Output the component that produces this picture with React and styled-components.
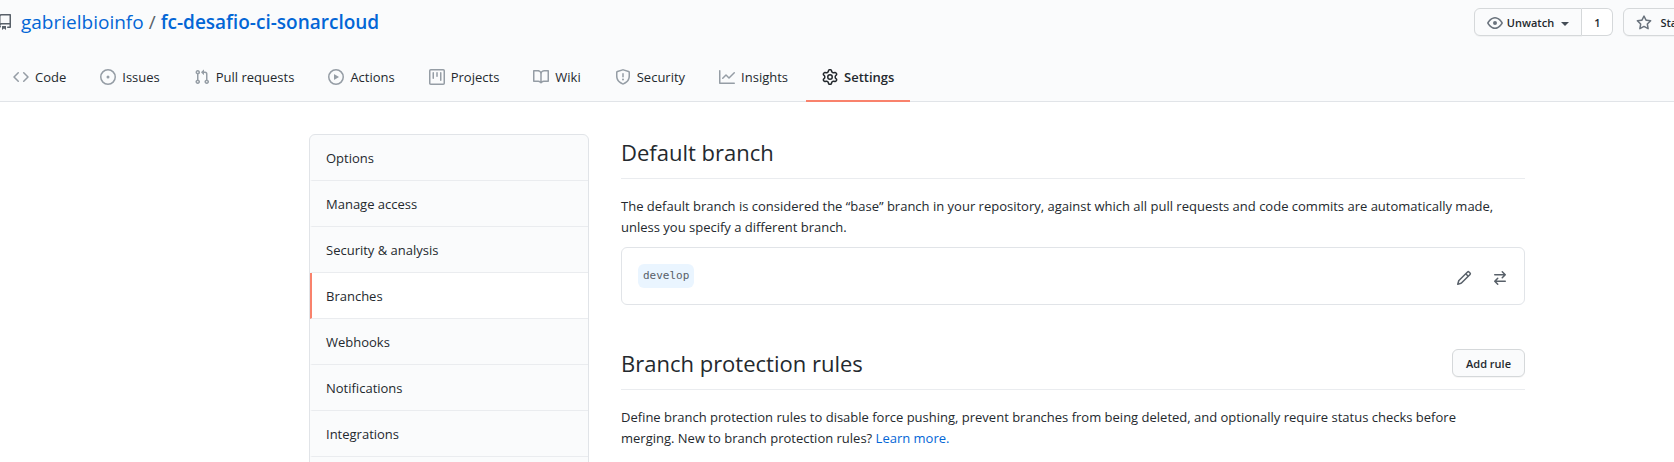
import React from "react";
import styled, { createGlobalStyle } from "styled-components";

const GlobalStyle = createGlobalStyle`
  *, *::before, *::after { box-sizing: border-box; }
  body {
    margin: 0;
    background: #ffffff;
    color: #24292e;
    font-family: "Open Sans", "Noto Sans", sans-serif;
    font-size: 13px;
    line-height: 21px;
    overflow: hidden;
  }
  a { color: #0366d6; text-decoration: none; }
  h1, h2, p { margin: 0; padding: 0; }
  button { font-family: inherit; color: inherit; cursor: pointer; }
`;

const icons = {
  repo: "M2 2.5A2.5 2.5 0 014.5 0h8.75a.75.75 0 01.75.75v12.5a.75.75 0 01-.75.75h-2.5a.75.75 0 110-1.5h1.75v-2h-8a1 1 0 00-.714 1.7.75.75 0 01-1.072 1.05A2.495 2.495 0 012 11.5v-9zm10.5-1V9h-8c-.356 0-.694.074-1 .208V2.5a1 1 0 011-1h8zM5 12.25v3.25a.25.25 0 00.4.2l1.45-1.087a.25.25 0 01.3 0L8.6 15.7a.25.25 0 00.4-.2v-3.25a.25.25 0 00-.25-.25h-3.5a.25.25 0 00-.25.25z",
  code: "M4.72 3.22a.75.75 0 011.06 1.06L2.06 8l3.72 3.72a.75.75 0 11-1.06 1.06L.47 8.53a.75.75 0 010-1.06l4.25-4.25zm6.56 0a.75.75 0 10-1.06 1.06L13.94 8l-3.72 3.72a.75.75 0 101.06 1.06l4.25-4.25a.75.75 0 000-1.06l-4.25-4.25z",
  issue: "M8 9.5a1.5 1.5 0 100-3 1.5 1.5 0 000 3zM8 0a8 8 0 100 16A8 8 0 008 0zM1.5 8a6.5 6.5 0 1113 0 6.5 6.5 0 01-13 0z",
  pull: "M7.177 3.073L9.573.677A.25.25 0 0110 .854v4.792a.25.25 0 01-.427.177L7.177 3.427a.25.25 0 010-.354zM3.75 2.5a.75.75 0 100 1.5.75.75 0 000-1.5zm-2.25.75a2.25 2.25 0 113 2.122v5.256a2.251 2.251 0 11-1.5 0V5.372A2.25 2.25 0 011.5 3.25zM11 2.5h-1V4h1a1 1 0 011 1v5.628a2.251 2.251 0 101.5 0V5A2.5 2.5 0 0011 2.5zm1 10.25a.75.75 0 111.5 0 .75.75 0 01-1.5 0zM3.75 12a.75.75 0 100 1.5.75.75 0 000-1.5z",
  play: "M1.5 8a6.5 6.5 0 1113 0 6.5 6.5 0 01-13 0zM8 0a8 8 0 100 16A8 8 0 008 0zM6.379 5.227A.25.25 0 006 5.442v5.117a.25.25 0 00.379.214l4.264-2.559a.25.25 0 000-.428L6.379 5.227z",
  project: "M1.75 0A1.75 1.75 0 000 1.75v12.5C0 15.216.784 16 1.75 16h12.5A1.75 1.75 0 0016 14.25V1.75A1.75 1.75 0 0014.25 0H1.75zM1.5 1.75a.25.25 0 01.25-.25h12.5a.25.25 0 01.25.25v12.5a.25.25 0 01-.25.25H1.75a.25.25 0 01-.25-.25V1.75zM11.75 3a.75.75 0 00-.75.75v7.5a.75.75 0 001.5 0v-7.5a.75.75 0 00-.75-.75zm-8.25.75a.75.75 0 011.5 0v5.5a.75.75 0 01-1.5 0v-5.5zM8 3a.75.75 0 00-.75.75v3.5a.75.75 0 001.5 0v-3.5A.75.75 0 008 3z",
  book: "M0 1.75A.75.75 0 01.75 1h4.253c1.227 0 2.317.59 3 1.501A3.744 3.744 0 0111.006 1h4.245a.75.75 0 01.75.75v10.5a.75.75 0 01-.75.75h-4.507a2.25 2.25 0 00-1.591.659l-.622.621a.75.75 0 01-1.06 0l-.622-.621A2.25 2.25 0 005.258 13H.75a.75.75 0 01-.75-.75V1.75zm8.755 3a2.25 2.25 0 012.25-2.25H14.5v9h-3.757c-.71 0-1.4.201-1.992.572l.004-7.322zm-1.504 7.324l.004-5.073-.002-2.253A2.25 2.25 0 005.003 2.5H1.5v9h3.757a3.75 3.75 0 011.994.574z",
  shield: "M7.467.133a1.75 1.75 0 011.066 0l5.25 1.68A1.75 1.75 0 0115 3.48V7c0 1.566-.32 3.182-1.303 4.682-.983 1.498-2.585 2.813-5.032 3.855a1.7 1.7 0 01-1.33 0c-2.447-1.042-4.049-2.357-5.032-3.855C1.32 10.182 1 8.566 1 7V3.48a1.75 1.75 0 011.217-1.667l5.25-1.68zm.61 1.429a.25.25 0 00-.153 0l-5.25 1.68a.25.25 0 00-.174.238V7c0 1.358.275 2.666 1.057 3.86.784 1.194 2.121 2.34 4.366 3.297a.2.2 0 00.154 0c2.245-.956 3.582-2.104 4.366-3.298C13.225 9.666 13.5 8.36 13.5 7V3.48a.25.25 0 00-.174-.237l-5.25-1.68zM9 10.5a1 1 0 11-2 0 1 1 0 012 0zm-.25-5.75a.75.75 0 10-1.5 0v3a.75.75 0 001.5 0v-3z",
  graph: "M1.5 1.75a.75.75 0 00-1.5 0v12.5c0 .414.336.75.75.75h14.5a.75.75 0 000-1.5H1.5V1.75zm14.28 2.53a.75.75 0 00-1.06-1.06L10 7.94 7.53 5.47a.75.75 0 00-1.06 0L3.22 8.72a.75.75 0 001.06 1.06L7 7.06l2.47 2.47a.75.75 0 001.06 0l5.25-5.25z",
  gear: "M7.429 1.525a6.593 6.593 0 011.142 0c.036.003.108.036.137.146l.289 1.105c.147.56.55.967.997 1.189.174.086.341.183.501.29.417.278.97.423 1.53.27l1.102-.303c.11-.03.175.016.195.046.219.31.41.641.573.989.014.031.022.11-.059.19l-.815.806c-.411.406-.562.957-.53 1.456a4.588 4.588 0 010 .582c-.032.499.119 1.05.53 1.456l.815.806c.08.08.073.159.059.19a6.494 6.494 0 01-.573.99c-.02.029-.086.074-.195.045l-1.103-.303c-.559-.153-1.112-.008-1.529.27-.16.107-.327.204-.5.29-.449.222-.851.628-.998 1.189l-.289 1.105c-.029.11-.101.143-.137.146a6.613 6.613 0 01-1.142 0c-.036-.003-.108-.037-.137-.146l-.289-1.105c-.147-.56-.55-.967-.997-1.189a4.502 4.502 0 01-.501-.29c-.417-.278-.97-.423-1.53-.27l-1.102.303c-.11.03-.175-.016-.195-.046a6.492 6.492 0 01-.573-.989c-.014-.031-.022-.11.059-.19l.815-.806c.411-.406.562-.957.53-1.456a4.587 4.587 0 010-.582c.032-.499-.119-1.05-.53-1.456l-.815-.806c-.08-.08-.073-.159-.059-.19a6.44 6.44 0 01.573-.99c.02-.029.086-.075.195-.045l1.103.303c.559.153 1.112.008 1.529-.27.16-.107.327-.204.5-.29.449-.222.851-.628.998-1.189l.289-1.105c.029-.11.101-.143.137-.146zM8 0c-.236 0-.47.01-.701.03-.743.065-1.29.615-1.458 1.261l-.29 1.106c-.017.066-.078.158-.211.224a5.994 5.994 0 00-.668.386c-.123.082-.233.09-.3.071L3.27 2.776c-.644-.177-1.392.02-1.82.63a7.977 7.977 0 00-.704 1.217c-.315.675-.111 1.422.363 1.891l.815.806c.05.048.098.147.088.294a6.084 6.084 0 000 .772c.01.147-.038.246-.088.294l-.815.806c-.474.469-.678 1.216-.363 1.891.2.428.436.835.704 1.218.428.609 1.176.806 1.82.63l1.103-.303c.066-.019.176-.011.299.071.213.143.436.272.668.386.133.066.194.158.212.224l.289 1.106c.169.646.715 1.196 1.458 1.26a8.094 8.094 0 001.402 0c.743-.064 1.29-.614 1.458-1.26l.29-1.106c.017-.066.078-.158.211-.224a5.98 5.98 0 00.668-.386c.123-.082.233-.09.3-.071l1.102.302c.644.177 1.392-.02 1.82-.63.268-.382.505-.789.704-1.217.315-.675.111-1.422-.364-1.891l-.814-.806c-.05-.048-.098-.147-.088-.294a6.1 6.1 0 000-.772c-.01-.147.039-.246.088-.294l.814-.806c.475-.469.679-1.216.364-1.891a7.992 7.992 0 00-.704-1.218c-.428-.609-1.176-.806-1.82-.63l-1.103.303c-.066.019-.176.011-.299-.071a5.991 5.991 0 00-.668-.386c-.133-.066-.194-.158-.212-.224L10.16 1.29C9.99.645 9.444.095 8.701.031A8.094 8.094 0 008 0zm1.5 8a1.5 1.5 0 11-3 0 1.5 1.5 0 013 0zM11 8a3 3 0 11-6 0 3 3 0 016 0z",
  eye: "M1.679 7.932c.412-.621 1.242-1.75 2.366-2.717C5.175 4.242 6.527 3.5 8 3.5c1.473 0 2.824.742 3.955 1.715 1.124.967 1.954 2.096 2.366 2.717a.119.119 0 010 .136c-.412.621-1.242 1.75-2.366 2.717C10.825 11.758 9.473 12.5 8 12.5c-1.473 0-2.824-.742-3.955-1.715C2.92 9.818 2.09 8.69 1.679 8.068a.119.119 0 010-.136zM8 2c-1.981 0-3.67.992-4.933 2.078C1.797 5.169.88 6.423.43 7.1a1.619 1.619 0 000 1.798c.45.678 1.367 1.932 2.637 3.024C4.329 13.008 6.019 14 8 14c1.981 0 3.67-.992 4.933-2.078 1.27-1.091 2.187-2.345 2.637-3.023a1.619 1.619 0 000-1.798c-.45-.678-1.367-1.932-2.637-3.023C11.671 2.992 9.981 2 8 2zm0 8a2 2 0 100-4 2 2 0 000 4z",
  star: "M8 .25a.75.75 0 01.673.418l1.882 3.815 4.21.612a.75.75 0 01.416 1.279l-3.046 2.97.719 4.192a.75.75 0 01-1.088.791L8 12.347l-3.766 1.98a.75.75 0 01-1.088-.79l.72-4.194L.818 6.374a.75.75 0 01.416-1.28l4.21-.611L7.327.668A.75.75 0 018 .25zm0 2.445L6.615 5.5a.75.75 0 01-.564.41l-3.097.45 2.24 2.184a.75.75 0 01.216.664l-.528 3.084 2.769-1.456a.75.75 0 01.698 0l2.77 1.456-.53-3.084a.75.75 0 01.216-.664l2.24-2.183-3.096-.45a.75.75 0 01-.564-.41L8 2.694v.001z",
  pencil: "M11.013 1.427a1.75 1.75 0 012.474 0l1.086 1.086a1.75 1.75 0 010 2.474l-8.61 8.61c-.21.21-.47.364-.756.445l-3.251.93a.75.75 0 01-.927-.928l.929-3.25a1.75 1.75 0 01.445-.758l8.61-8.61zm1.414 1.06a.25.25 0 00-.354 0L10.811 3.75l1.439 1.44 1.263-1.263a.25.25 0 000-.354l-1.086-1.086zM11.189 6.25L9.75 4.81l-6.286 6.287a.25.25 0 00-.064.108l-.558 1.953 1.953-.558a.249.249 0 00.108-.064l6.286-6.286z",
  swap: "M5.22 14.78a.75.75 0 001.06-1.06L4.56 12h8.69a.75.75 0 000-1.5H4.56l1.72-1.72a.75.75 0 00-1.06-1.06l-3 3a.75.75 0 000 1.06l3 3zm5.56-6.5a.75.75 0 11-1.06-1.06l1.72-1.72H2.75a.75.75 0 010-1.5h8.69L9.72 2.28a.75.75 0 011.06-1.06l3 3a.75.75 0 010 1.06l-3 3z",
};

const IconSvg = styled.svg`
  flex: none;
  width: 16px;
  height: 16px;
  fill: ${(p) => p.$color};
`;

function Icon({ name, color = "#6a737d" }) {
  return (
    <IconSvg viewBox="0 0 16 16" $color={color} aria-hidden="true">
      <path fillRule="evenodd" d={icons[name]} />
    </IconSvg>
  );
}

const Header = styled.header`
  background: #fafbfc;
  box-shadow: inset 0 -1px 0 #e1e4e8;
`;

const TitleRow = styled.div`
  display: flex;
  justify-content: space-between;
  align-items: flex-start;
  height: 54px;
  padding-top: 8px;
`;

const RepoTitle = styled.h1`
  display: flex;
  align-items: center;
  gap: 8px;
  margin-left: -3px;
  font-size: 19px;
  font-weight: 400;
  line-height: 28px;
  white-space: nowrap;
`;

const RepoPath = styled.span`
  display: flex;
  gap: 5px;
`;

const RepoName = styled.a`
  font-weight: 600;
`;

const Slash = styled.span`
  color: #586069;
`;

const Actions = styled.div`
  display: flex;
  gap: 10px;
  margin-right: -21px;
`;

const ButtonGroup = styled.div`
  display: flex;
`;

const Button = styled.button`
  display: flex;
  align-items: center;
  gap: ${(p) => p.$gap || "4px"};
  height: 28px;
  padding: 1px ${(p) => p.$pad || "12px"} 0;
  border: 1px solid #d5d8da;
  border-radius: ${(p) => (p.$joined ? "6px 0 0 6px" : "6px")};
  background: #fafbfc;
  box-shadow: 0 1px 0 rgba(27, 31, 35, 0.04);
  font-size: 11px;
  font-weight: 600;
  line-height: 20px;
  white-space: nowrap;
`;

const Count = styled.a`
  display: flex;
  align-items: center;
  height: 28px;
  padding: 1px 12px 0;
  border: 1px solid #d5d8da;
  border-left: 0;
  border-radius: 0 6px 6px 0;
  background: #ffffff;
  color: #24292e;
  font-size: 11px;
  font-weight: 600;
`;

const Caret = styled.span`
  margin: 2px 0 0 3px;
  border: 4px solid transparent;
  border-top-color: #444d56;
  border-bottom: 0;
`;

const Tabs = styled.nav`
  display: flex;
  gap: 2px;
  margin-left: -3px;
`;

const Tab = styled.a`
  display: flex;
  align-items: center;
  gap: 6px;
  height: 48px;
  padding: 0 16px;
  border-bottom: 2px solid ${(p) => (p.$active ? "#f9826c" : "transparent")};
  color: #24292e;
  font-weight: ${(p) => (p.$active ? 600 : 400)};
  white-space: nowrap;
`;

const Page = styled.div`
  display: flex;
  align-items: flex-start;
  gap: 32px;
  padding: 32px 149px 0 309px;
`;

const Menu = styled.nav`
  flex: none;
  width: 280px;
  padding-bottom: 16px;
  border: 1px solid #e1e4e8;
  border-radius: 6px;
  background: #fafbfc;
  overflow: hidden;
`;

const MenuItem = styled.a`
  display: flex;
  align-items: center;
  height: 46px;
  padding: 2px 0 0 14px;
  border-bottom: 1px solid #eaecef;
  border-left: 2px solid ${(p) => (p.$active ? "#f9826c" : "transparent")};
  background: ${(p) => (p.$active ? "#ffffff" : "transparent")};
  color: #24292e;
`;

const Content = styled.main`
  flex: 1;
  min-width: 0;
  display: flex;
  flex-direction: column;
  gap: 40px;
`;

const SectionHead = styled.div`
  display: flex;
  justify-content: space-between;
  align-items: flex-start;
  margin-bottom: 17px;
  padding-bottom: 8px;
  border-bottom: 1px solid #eaecef;
`;

const Heading = styled.h2`
  font-size: 22px;
  font-weight: 400;
  line-height: 36px;
`;

const HeadAction = styled.div`
  padding-top: 4px;
`;

const Paragraph = styled.p`
  padding-right: 24px;
`;

const BranchBox = styled.div`
  display: flex;
  justify-content: space-between;
  align-items: center;
  height: 58px;
  margin-top: 9px;
  padding: 0 16px;
  border: 1px solid #e1e4e8;
  border-radius: 6px;
`;

const BranchName = styled.span`
  padding: 0 5px;
  border-radius: 6px;
  background: #eaf5ff;
  color: #586069;
  font-family: "DejaVu Sans Mono", monospace;
  font-size: 11px;
  line-height: 24px;
`;

const BranchTools = styled.div`
  display: flex;
  gap: 20px;
  padding-top: 4px;
`;

const IconButton = styled.button`
  display: flex;
  padding: 0;
  border: 0;
  background: none;
`;

const tabs = [
  ["code", "Code"],
  ["issue", "Issues"],
  ["pull", "Pull requests"],
  ["play", "Actions"],
  ["project", "Projects"],
  ["book", "Wiki"],
  ["shield", "Security"],
  ["graph", "Insights"],
  ["gear", "Settings"],
];

const menu = [
  "Options",
  "Manage access",
  "Security & analysis",
  "Branches",
  "Webhooks",
  "Notifications",
  "Integrations",
];

export default function App() {
  return (
    <>
      <GlobalStyle />
      <Header>
        <TitleRow>
          <RepoTitle>
            <Icon name="repo" color="#586069" />
            <RepoPath>
              <a href="#owner">gabrielbioinfo</a>
              <Slash>/</Slash>
              <RepoName href="#repo">fc-desafio-ci-sonarcloud</RepoName>
            </RepoPath>
          </RepoTitle>
          <Actions>
            <ButtonGroup>
              <Button type="button" $joined>
                <Icon name="eye" />
                Unwatch
                <Caret />
              </Button>
              <Count href="#watchers">1</Count>
            </ButtonGroup>
            <Button type="button" $gap="8px">
              <Icon name="star" />
              Star
            </Button>
          </Actions>
        </TitleRow>
        <Tabs aria-label="Repository">
          {tabs.map(([icon, label]) => {
            const active = label === "Settings";
            return (
              <Tab key={label} href={"#" + icon} $active={active}>
                <Icon name={icon} color={active ? "#24292e" : "#959da5"} />
                {label}
              </Tab>
            );
          })}
        </Tabs>
      </Header>
      <Page>
        <Menu aria-label="Settings">
          {menu.map((label) => (
            <MenuItem key={label} href="#settings" $active={label === "Branches"}>
              {label}
            </MenuItem>
          ))}
        </Menu>
        <Content>
          <section>
            <SectionHead>
              <Heading>Default branch</Heading>
            </SectionHead>
            <Paragraph>
              The default branch is considered the “base” branch in your repository, against which all
              pull requests and code commits are automatically made, unless you specify a different
              branch.
            </Paragraph>
            <BranchBox>
              <BranchName>develop</BranchName>
              <BranchTools>
                <IconButton type="button" aria-label="Rename branch">
                  <Icon name="pencil" color="#586069" />
                </IconButton>
                <IconButton type="button" aria-label="Switch to another branch">
                  <Icon name="swap" color="#586069" />
                </IconButton>
              </BranchTools>
            </BranchBox>
          </section>
          <section>
            <SectionHead>
              <Heading>Branch protection rules</Heading>
              <HeadAction>
                <Button type="button" $pad="13px">
                  Add rule
                </Button>
              </HeadAction>
            </SectionHead>
            <Paragraph>
              Define branch protection rules to disable force pushing, prevent branches from being
              deleted, and optionally require status checks before merging. New to branch protection
              rules? <a href="#docs">Learn more.</a>
            </Paragraph>
          </section>
        </Content>
      </Page>
    </>
  );
}
